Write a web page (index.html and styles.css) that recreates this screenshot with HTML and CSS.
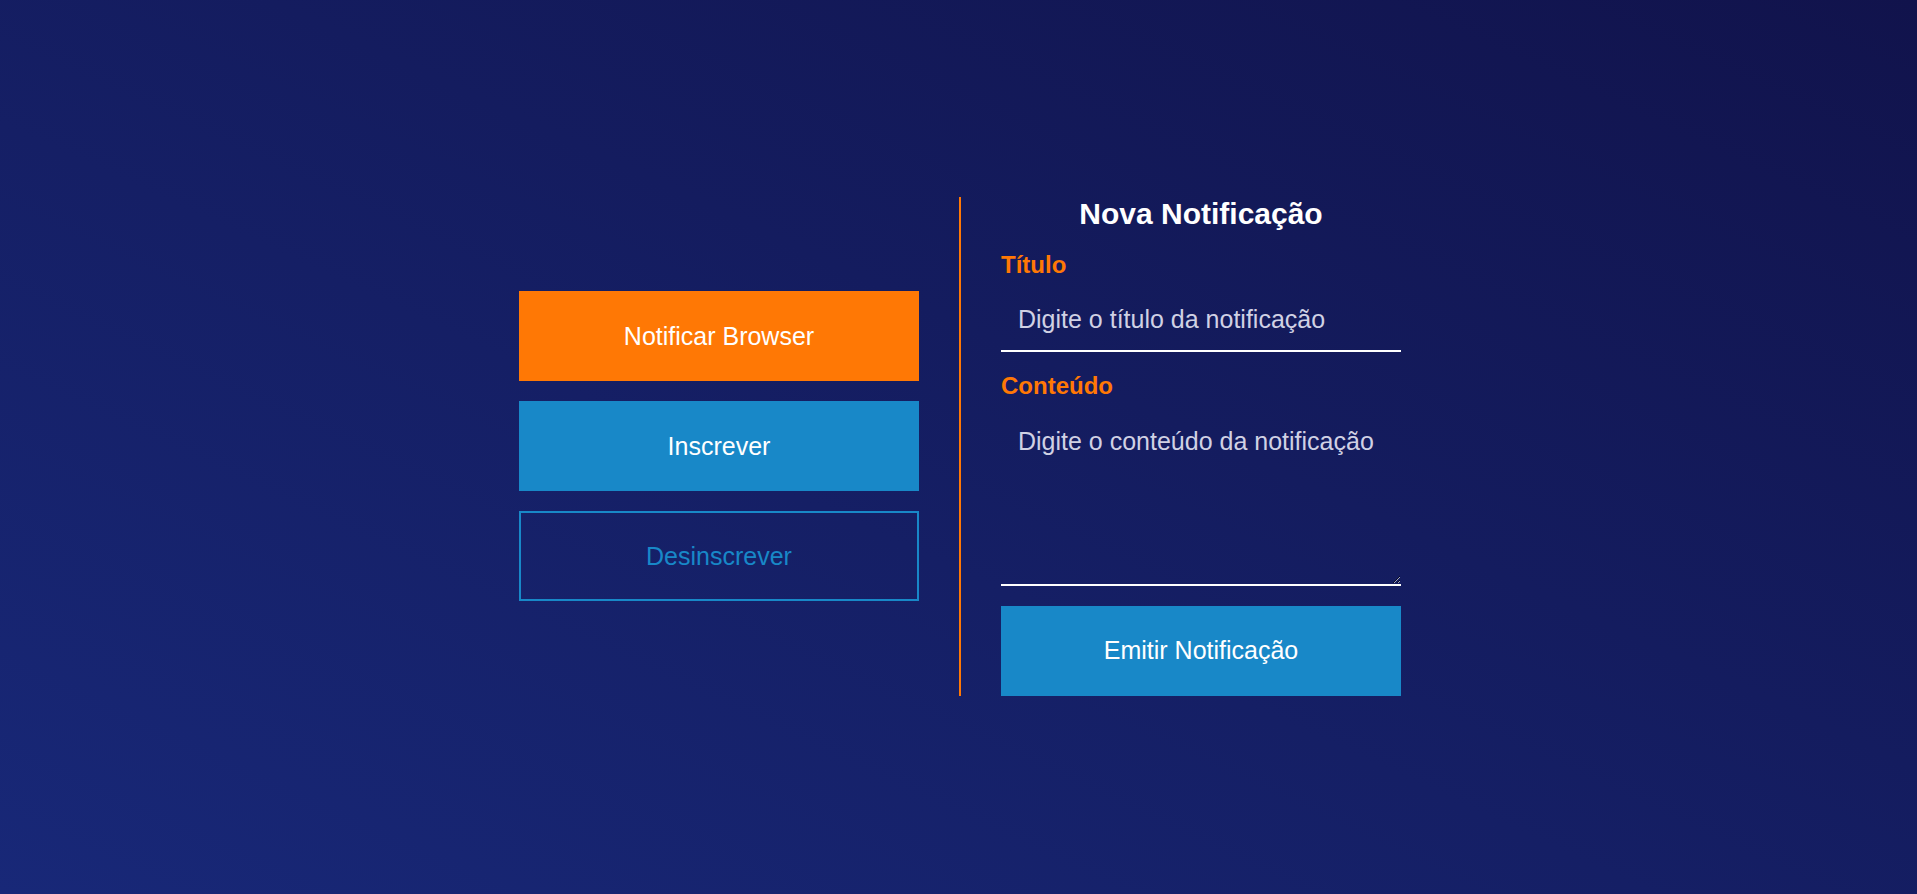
FILE: index.html
```html
<!DOCTYPE html>
<html lang="pt-BR">
<head>
  <meta charset="UTF-8">
  <meta name="viewport" content="width=device-width, initial-scale=1.0">
  <title>Notificações</title>
  <link rel="stylesheet" href="styles.css">
</head>
<body>
  <div class="container">
    <div class="actions">
      <button class="btn btn-orange">Notificar Browser</button>
      <button class="btn btn-blue">Inscrever</button>
      <button class="btn btn-outline">Desinscrever</button>
    </div>

    <form class="form" onsubmit="return false;">
      <h2>Nova Notificação</h2>
      <label for="titulo">Título</label>
      <input type="text" id="titulo" placeholder="Digite o título da notificação">

      <label for="conteudo">Conteúdo</label>
      <textarea id="conteudo" placeholder="Digite o conteúdo da notificação"></textarea>

      <button class="btn btn-blue" type="submit">Emitir Notificação</button>
    </form>
  </div>
</body>
</html>
```

FILE: styles.css
```css
* {
  box-sizing: border-box;
}

html, body {
  height: 100%;
}

body {
  margin: 0;
  font-family: "Liberation Sans", Arial, sans-serif;
  background: linear-gradient(to top right, #182878, #11134c);
  color: #fff;
}

.container {
  min-height: 100%;
  display: flex;
  align-items: center;
  justify-content: center;
  padding: 0 0 2px 3px;
}

.actions {
  width: 400px;
  display: flex;
  flex-direction: column;
  gap: 20px;
  margin-right: 40px;
}

.btn {
  display: block;
  width: 100%;
  height: 90px;
  border: none;
  font-family: inherit;
  font-size: 25px;
  color: #fff;
  cursor: pointer;
}

.btn-orange {
  background: #ff7805;
}

.btn-blue {
  background: #1888c8;
}

.btn-outline {
  background: transparent;
  border: 2px solid #1888c8;
  color: #1888c8;
}

.form {
  width: 442px;
  border-left: 2px solid #ff7805;
  padding-left: 40px;
  display: flex;
  flex-direction: column;
}

.form h2 {
  margin: 0 0 20px;
  font-size: 30px;
  text-align: center;
}

.form label {
  color: #ff7805;
  font-weight: bold;
  font-size: 24px;
  margin-bottom: 7px;
}

.form input,
.form textarea {
  width: 100%;
  background: transparent;
  border: none;
  border-bottom: 2px solid #fff;
  color: #fff;
  font-family: inherit;
  font-size: 25px;
  margin-bottom: 20px;
  outline: none;
}

.form input {
  height: 66px;
  padding: 4px 17px 0;
}

.form textarea {
  height: 179px;
  padding: 20px 17px;
  resize: vertical;
}

.form input::placeholder,
.form textarea::placeholder {
  color: #d0d1e4;
}
```
